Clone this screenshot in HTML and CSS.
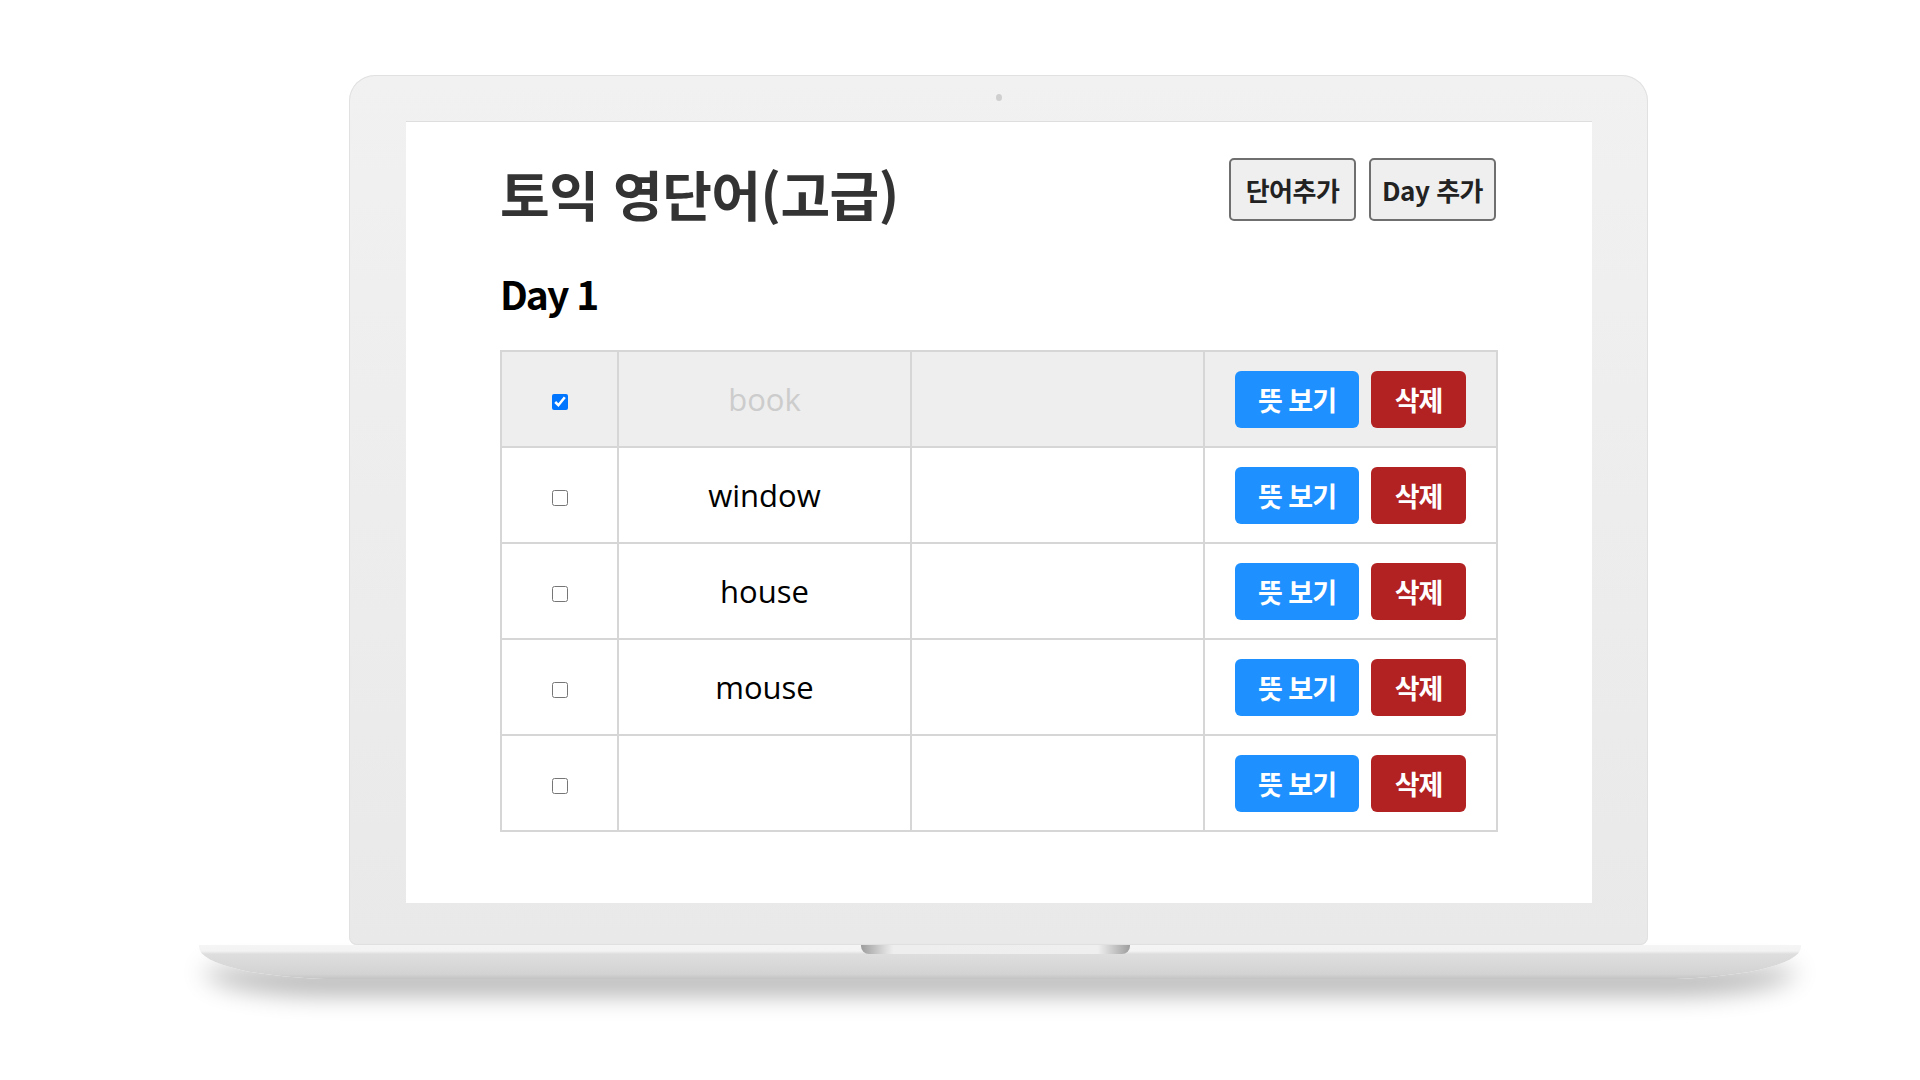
FILE: index.html
```html
<!DOCTYPE html>
<html lang="ko">
<head>
<meta charset="utf-8">
<title>토익 영단어(고급)</title>
<link rel="stylesheet" href="styles.css">
</head>
<body>
<div class="device">
  <div class="lid">
    <span class="camera"></span>
    <div class="screen">
      <div class="topbar">
        <h1 class="title">토익 영단어(고급)</h1>
        <div class="actions">
          <button class="btn-plain">단어추가</button>
          <button class="btn-plain">Day 추가</button>
        </div>
      </div>
      <h2 class="day">Day 1</h2>
      <table class="words">
        <colgroup>
          <col class="c-check"><col class="c-word"><col class="c-mean"><col class="c-act">
        </colgroup>
        <tbody>
          <tr class="done">
            <td class="cell-check"><input type="checkbox" checked></td>
            <td class="cell-word">book</td>
            <td></td>
            <td class="cell-act"><button class="btn-blue">뜻 보기</button><button class="btn-red">삭제</button></td>
          </tr>
          <tr>
            <td class="cell-check"><input type="checkbox"></td>
            <td class="cell-word">window</td>
            <td></td>
            <td class="cell-act"><button class="btn-blue">뜻 보기</button><button class="btn-red">삭제</button></td>
          </tr>
          <tr>
            <td class="cell-check"><input type="checkbox"></td>
            <td class="cell-word">house</td>
            <td></td>
            <td class="cell-act"><button class="btn-blue">뜻 보기</button><button class="btn-red">삭제</button></td>
          </tr>
          <tr>
            <td class="cell-check"><input type="checkbox"></td>
            <td class="cell-word">mouse</td>
            <td></td>
            <td class="cell-act"><button class="btn-blue">뜻 보기</button><button class="btn-red">삭제</button></td>
          </tr>
          <tr>
            <td class="cell-check"><input type="checkbox"></td>
            <td class="cell-word"></td>
            <td></td>
            <td class="cell-act"><button class="btn-blue">뜻 보기</button><button class="btn-red">삭제</button></td>
          </tr>
        </tbody>
      </table>
    </div>
  </div>
  <div class="base"><span class="notch"></span></div>
</div>
</body>
</html>
```

FILE: styles.css
```css
html, body {
  margin: 0;
  padding: 0;
  background: #ffffff;
}
body {
  width: 1920px;
  height: 1080px;
  overflow: hidden;
  font-family: "Open Sans", "Noto Sans CJK KR", sans-serif;
}

.device {
  width: 1602px;
  margin: 75px 0 0 199px;
  display: flex;
  flex-direction: column;
  align-items: center;
}

.lid {
  position: relative;
  box-sizing: border-box;
  width: 1299px;
  height: 870px;
  margin-right: 3px;
  padding: 47px 56px 42px 57px;
  background: linear-gradient(#f1f1f1, #e9e9e9);
  border-radius: 26px 26px 8px 8px;
  box-shadow: inset 0 0 0 1px #e1e1e1;
}

.camera {
  position: absolute;
  top: 19px;
  left: 647px;
  width: 6px;
  height: 7px;
  border-radius: 50%;
  background: #cfcfcf;
}

.screen {
  box-sizing: border-box;
  width: 1186px;
  height: 781px;
  background: #ffffff;
  padding: 0 96px 0 94px;
  box-shadow: 0 -1px 0 #dedede;
}

.topbar {
  display: flex;
  justify-content: space-between;
  align-items: flex-start;
}

.title {
  margin: 45px 0 0 0;
  font-family: "Noto Sans CJK KR", sans-serif;
  font-size: 54px;
  line-height: 1;
  font-weight: 700;
  color: #333333;
  letter-spacing: -0.5px;
}

.actions {
  display: flex;
  gap: 13px;
  margin-top: 36px;
}

.btn-plain {
  box-sizing: border-box;
  width: 127px;
  height: 63px;
  padding: 0;
  background: #efefef;
  border: 2px solid #6f6f6f;
  border-radius: 5px;
  font-family: "Noto Sans CJK KR", sans-serif;
  font-size: 26px;
  font-weight: 700;
  color: #222222;
  letter-spacing: -0.5px;
}

.day {
  margin: 53px 0 0 0;
  font-family: "Noto Sans CJK KR", sans-serif;
  font-size: 39px;
  line-height: 1;
  font-weight: 700;
  color: #000000;
  letter-spacing: -2px;
}

.words {
  margin-top: 37px;
  width: 996px;
  border-collapse: collapse;
  table-layout: fixed;
}
.c-check { width: 117px; }
.c-word, .c-mean, .c-act { width: 293px; }

.words td {
  height: 94px;
  padding: 0;
  border: 2px solid #d6d6d6;
  text-align: center;
  vertical-align: middle;
}
.words tr.done {
  background: #eeeeee;
}

.cell-word {
  font-size: 31px;
  color: #000000;
}
.done .cell-word {
  color: #cccccc;
}

.cell-check input {
  width: 16px;
  height: 16px;
  margin: 11px 0 0 0;
  accent-color: #0075ff;
}

.cell-act {
  white-space: nowrap;
}
.btn-blue, .btn-red {
  box-sizing: border-box;
  height: 57px;
  padding: 0;
  border: none;
  border-radius: 6px;
  color: #ffffff;
  font-family: "Noto Sans CJK KR", sans-serif;
  font-size: 27px;
  font-weight: 700;
  letter-spacing: -1px;
  vertical-align: middle;
}
.btn-blue {
  width: 124px;
  background: #1e90ff;
  margin-right: 12px;
}
.btn-red {
  width: 95px;
  background: #b22222;
}

.base {
  position: relative;
  width: 1602px;
  height: 34px;
  border-radius: 0 0 140px 140px / 0 0 32px 32px;
  background: linear-gradient(#f5f5f5 0, #f3f3f3 6px, #dedede 9px, #d3d3d3 85%, #c4c4c4 100%);
  box-shadow: 0 20px 24px -4px rgba(0, 0, 0, 0.3);
  display: flex;
  justify-content: center;
}

.notch {
  width: 269px;
  height: 9px;
  margin-right: 10px;
  border-radius: 0 0 8px 8px;
  background: linear-gradient(90deg, #9d9d9d, #dcdcdc 9%, #eeeeee 12%, #efefef 88%, #dcdcdc 91%, #9d9d9d);
}
```
